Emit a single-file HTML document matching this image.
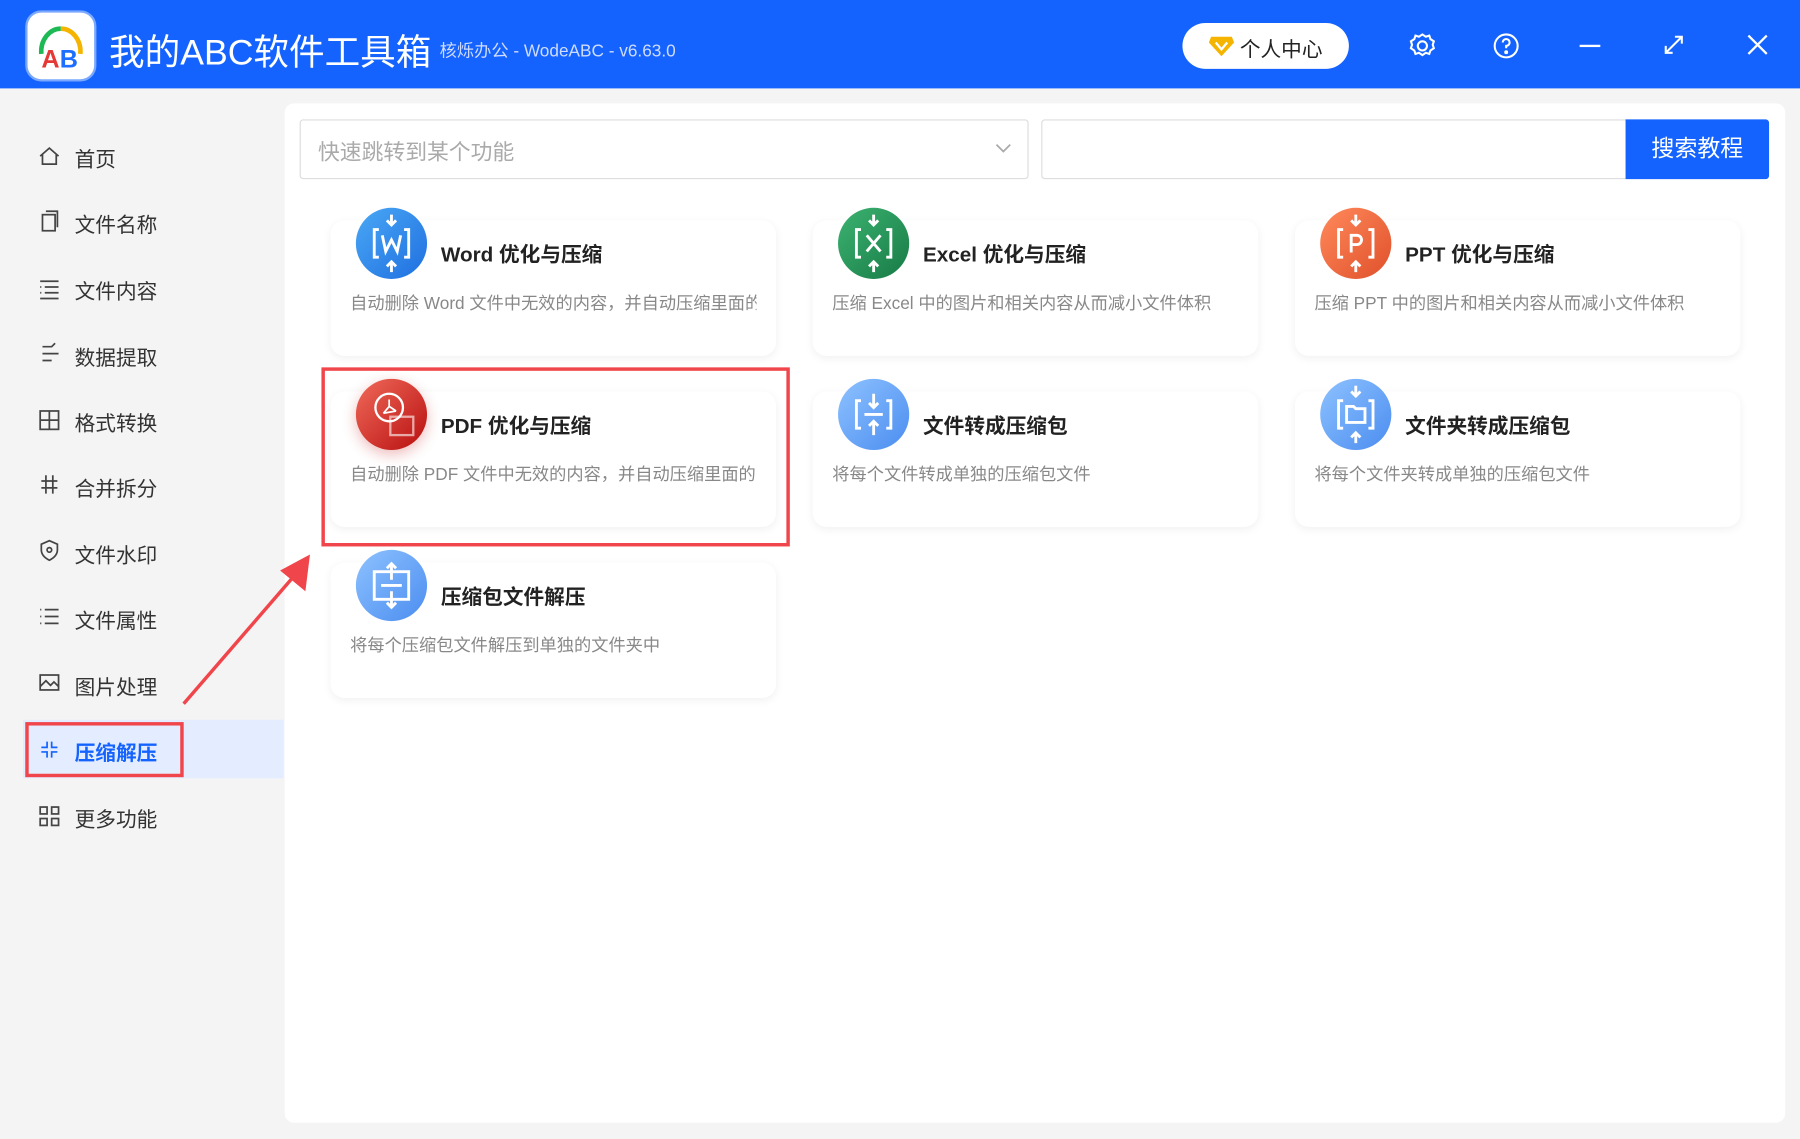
<!DOCTYPE html>
<html><head><meta charset="utf-8"><style>
html,body{margin:0;padding:0;width:1800px;height:1139px;overflow:hidden;background:#f4f4f4}
#w{position:absolute;left:0;top:0;width:1568px;height:992px;transform:scale(1.148);transform-origin:0 0;font-family:"Liberation Sans","Noto Sans CJK SC",sans-serif;background:#f4f4f4}
.a{position:absolute}
.hdr{left:0;top:0;width:1568px;height:77px;background:#1463ff}
.side{font-size:18px;color:#333;width:248px;height:992px}
.si{position:absolute;left:65px;white-space:nowrap}
.card{position:absolute;width:388px;height:118px;background:#fff;border-radius:12px;box-shadow:0 2px 8px rgba(0,0,0,.06)}
.circ{position:absolute;left:22px;top:-11px;width:62px;height:62px;border-radius:50%}
.ct{position:absolute;left:96px;top:16px;font-size:18px;font-weight:bold;color:#222;white-space:nowrap}
.cd{position:absolute;left:17px;top:61px;font-size:15px;color:#888;white-space:nowrap;width:354px;overflow:hidden}
</style></head><body><div id="w">
<div class="a hdr"></div>
<div class="a" style="left:22px;top:9px;width:62px;height:62px;background:#fff;border-radius:14px;border:2px solid #7aa8ff;box-sizing:border-box"></div>
<svg class="a" style="left:22px;top:9px" width="62" height="62"><path d="M14 38 A17 20 0 0 1 31 16" stroke="#1db954" stroke-width="4" fill="none"/><path d="M31 16 A17 20 0 0 1 48 38" stroke="#f5b400" stroke-width="4" fill="none"/><text x="14" y="50" font-size="22" font-weight="bold" fill="#e53935" font-family="Liberation Sans">A</text><text x="30" y="50" font-size="22" font-weight="bold" fill="#1e6fff" font-family="Liberation Sans">B</text></svg>
<div class="a" style="left:95px;top:20px;font-size:31px;color:#fff;white-space:nowrap">我的ABC软件工具箱</div>
<div class="a" style="left:383px;top:33px;font-size:15px;color:#cfdcff;white-space:nowrap">核烁办公 - WodeABC - v6.63.0</div>
<div class="a" style="left:1030px;top:20px;width:145px;height:40px;background:#fff;border-radius:20px"></div>
<svg class="a" style="left:1052px;top:30px" width="24" height="20"><path d="M3 2h18l2 5-11 12L1 7z" fill="#f5b400"/><path d="M7 7l5 6 5-6" stroke="#fff" stroke-width="2" fill="none"/></svg>
<div class="a" style="left:1080px;top:29px;font-size:18px;color:#222;white-space:nowrap">个人中心</div>
<svg class="a" style="left:1226px;top:27px" width="26" height="26" fill="none" stroke="#fff" stroke-width="1.8"><circle cx="13" cy="13" r="4"/><path d="M13 3l3 2 3-1 1 3 3 2-1 3 1 3-3 2-1 3-3-1-3 2-3-2-3 1-1-3-3-2 1-3-1-3 3-2 1-3 3 1z"/></svg>
<svg class="a" style="left:1299px;top:27px" width="26" height="26" fill="none" stroke="#fff" stroke-width="1.8"><circle cx="13" cy="13" r="10"/><path d="M10 10a3 3 0 1 1 3 3v2"/><circle cx="13" cy="18.5" r=".8" fill="#fff"/></svg>
<div class="a" style="left:1376px;top:39px;width:18px;height:2px;background:#fff"></div>
<svg class="a" style="left:1448px;top:29px" width="20" height="20" stroke="#fff" stroke-width="1.8" fill="none"><path d="M3 17L17 3M11 3h6v6M3 11v6h6"/></svg>
<svg class="a" style="left:1521px;top:29px" width="20" height="20" stroke="#fff" stroke-width="2"><path d="M2 2l16 16M18 2L2 18"/></svg>

<div class="a side" style="left:0;top:0">
<div class="a" style="left:20px;top:627px;width:227px;height:51px;background:#e4edff"></div>
<div class="a" style="left:22px;top:629px;width:138px;height:48px;border:3px solid #f0454b;box-sizing:border-box"></div>
<div class="si" style="top:125px">首页</div>
<div class="si" style="top:182px">文件名称</div>
<div class="si" style="top:240px">文件内容</div>
<div class="si" style="top:298px">数据提取</div>
<div class="si" style="top:355px">格式转换</div>
<div class="si" style="top:412px">合并拆分</div>
<div class="si" style="top:470px">文件水印</div>
<div class="si" style="top:527px">文件属性</div>
<div class="si" style="top:585px">图片处理</div>
<div class="si" style="top:642px;color:#1463ff;font-weight:bold">压缩解压</div>
<div class="si" style="top:700px">更多功能</div>
<svg class="a" style="left:33px;top:126px" width="20" height="620" fill="none" stroke="#444" stroke-width="1.5">
<path d="M2 10L10 3l8 7M4 8v9h12V8"/>
<rect x="4" y="61" width="11" height="14"/><path d="M7 58h10v14"/>
<path d="M2 119h16M6 124h12M6 129h12M2 124h1M2 129h1M2 134h16"/>
<path d="M4 182h14M4 176h8l3-3M4 188h8"/>
<rect x="2" y="232" width="16" height="16"/><path d="M10 232v16M2 240h16"/>
<path d="M7 288v16M13 288v16M3 293h14M3 299h14"/>
<path d="M10 345l7 3v5c0 4-3 7-7 9-4-2-7-5-7-9v-5z"/><circle cx="10" cy="353" r="2"/>
<path d="M6 405h12M6 411h12M6 417h12M2 405h1M2 411h1M2 417h1"/>
<rect x="2" y="462" width="16" height="13"/><path d="M2 472l5-5 4 4 3-3 4 4"/>
<path stroke="#1463ff" d="M8 520v5H3M12 520v5h5M8 534v-5H3M12 534v-5h5"/>
<rect x="2" y="577" width="6" height="6"/><rect x="12" y="577" width="6" height="6"/><rect x="2" y="587" width="6" height="6"/><rect x="12" y="587" width="6" height="6"/>
</svg>
</div>

<div class="a" style="left:248px;top:90px;width:1307px;height:888px;background:#fff;border-radius:8px"></div>
<div class="a" style="left:261px;top:104px;width:635px;height:52px;border:1px solid #ddd;box-sizing:border-box;border-radius:3px"></div>
<div class="a" style="left:277px;top:118px;font-size:19px;color:#aaa;white-space:nowrap">快速跳转到某个功能</div>
<svg class="a" style="left:866px;top:123px" width="16" height="12" stroke="#aaa" stroke-width="1.5" fill="none"><path d="M2 3l6 6 6-6"/></svg>
<div class="a" style="left:907px;top:104px;width:510px;height:52px;border:1px solid #ddd;box-sizing:border-box;border-radius:3px 0 0 3px"></div>
<div class="a" style="left:1416px;top:104px;width:125px;height:52px;background:#1463ff;color:#fff;font-size:20px;line-height:52px;text-align:center;border-radius:0 3px 3px 0">搜索教程</div>

<div class="card" style="left:288px;top:192px"><div class="circ" style="background:linear-gradient(135deg,#4aa8f5,#1f6fe0)"></div><svg class="a" style="left:22px;top:-11px" width="62" height="62" stroke="#fff" stroke-width="2.5" fill="none"><path d="M20 19h-4v24h4M42 19h4v24h-4M31 6v9M27 11l4 4 4-4M31 56v-9M27 51l4-4 4 4M23 24l3 14 5-10 5 10 3-14"/></svg><div class="ct">Word 优化与压缩</div><div class="cd">自动删除 Word 文件中无效的内容，并自动压缩里面的图片</div></div>
<div class="card" style="left:708px;top:192px"><div class="circ" style="background:linear-gradient(135deg,#3cb371,#177a45)"></div><svg class="a" style="left:22px;top:-11px" width="62" height="62" stroke="#fff" stroke-width="2.5" fill="none"><path d="M20 19h-4v24h4M42 19h4v24h-4M31 6v9M27 11l4 4 4-4M31 56v-9M27 51l4-4 4 4M25 24l12 14M37 24L25 38"/></svg><div class="ct">Excel 优化与压缩</div><div class="cd">压缩 Excel 中的图片和相关内容从而减小文件体积</div></div>
<div class="card" style="left:1128px;top:192px"><div class="circ" style="background:linear-gradient(135deg,#ff8a5c,#e0502a)"></div><svg class="a" style="left:22px;top:-11px" width="62" height="62" stroke="#fff" stroke-width="2.5" fill="none"><path d="M20 19h-4v24h4M42 19h4v24h-4M31 6v9M27 11l4 4 4-4M31 56v-9M27 51l4-4 4 4M27 39V24h5a4 4 0 0 1 0 8h-5"/></svg><div class="ct">PPT 优化与压缩</div><div class="cd">压缩 PPT 中的图片和相关内容从而减小文件体积</div></div>

<div class="card" style="left:288px;top:341px"><div class="circ" style="background:linear-gradient(135deg,#f06a5a,#b80f0f);box-shadow:0 4px 12px rgba(200,30,30,.3)"></div><svg class="a" style="left:22px;top:-11px" width="62" height="62" stroke="#fff" stroke-width="2" fill="none"><circle cx="29" cy="25" r="12"/><path d="M29 18v6l-5 6M29 24l6 4M24 30l11-2" stroke-width="1.5"/><rect x="30" y="33" width="20" height="16" stroke-opacity=".6"/></svg><div class="ct">PDF 优化与压缩</div><div class="cd">自动删除 PDF 文件中无效的内容，并自动压缩里面的图片</div></div>
<div class="card" style="left:708px;top:341px"><div class="circ" style="background:linear-gradient(135deg,#8ec2ff,#4b8df0)"></div><svg class="a" style="left:22px;top:-11px" width="62" height="62" stroke="#fff" stroke-width="2.5" fill="none"><path d="M20 19h-4v24h4M42 19h4v24h-4M31 13v12M27 21l4 4 4-4M31 49V37M27 41l4-4 4 4M23 31h16"/></svg><div class="ct">文件转成压缩包</div><div class="cd">将每个文件转成单独的压缩包文件</div></div>
<div class="card" style="left:1128px;top:341px"><div class="circ" style="background:linear-gradient(135deg,#8ec2ff,#4b8df0)"></div><svg class="a" style="left:22px;top:-11px" width="62" height="62" stroke="#fff" stroke-width="2.5" fill="none"><path d="M20 19h-4v24h4M42 19h4v24h-4M31 6v9M27 11l4 4 4-4M31 56v-9M27 51l4-4 4 4M23 24h6l2 2h8v12H23z"/></svg><div class="ct">文件夹转成压缩包</div><div class="cd">将每个文件夹转成单独的压缩包文件</div></div>

<div class="card" style="left:288px;top:490px"><div class="circ" style="background:linear-gradient(135deg,#8ec2ff,#4b8df0)"></div><svg class="a" style="left:22px;top:-11px" width="62" height="62" stroke="#fff" stroke-width="2.5" fill="none"><path d="M16 19h30v24H16zM31 12v14M27 16l4-4 4 4M31 50V36M27 46l4 4 4-4M22 31h18"/></svg><div class="ct">压缩包文件解压</div><div class="cd">将每个压缩包文件解压到单独的文件夹中</div></div>

<div class="a" style="left:280px;top:320px;width:408px;height:156px;border:3px solid #f0454b;box-sizing:border-box"></div>
<svg class="a" style="left:150px;top:475px" width="130" height="145"><path d="M10 138L112 20" stroke="#f0454b" stroke-width="3"/><path d="M120 8l-4 32-22-18z" fill="#f0454b"/></svg>
</div></body></html>
